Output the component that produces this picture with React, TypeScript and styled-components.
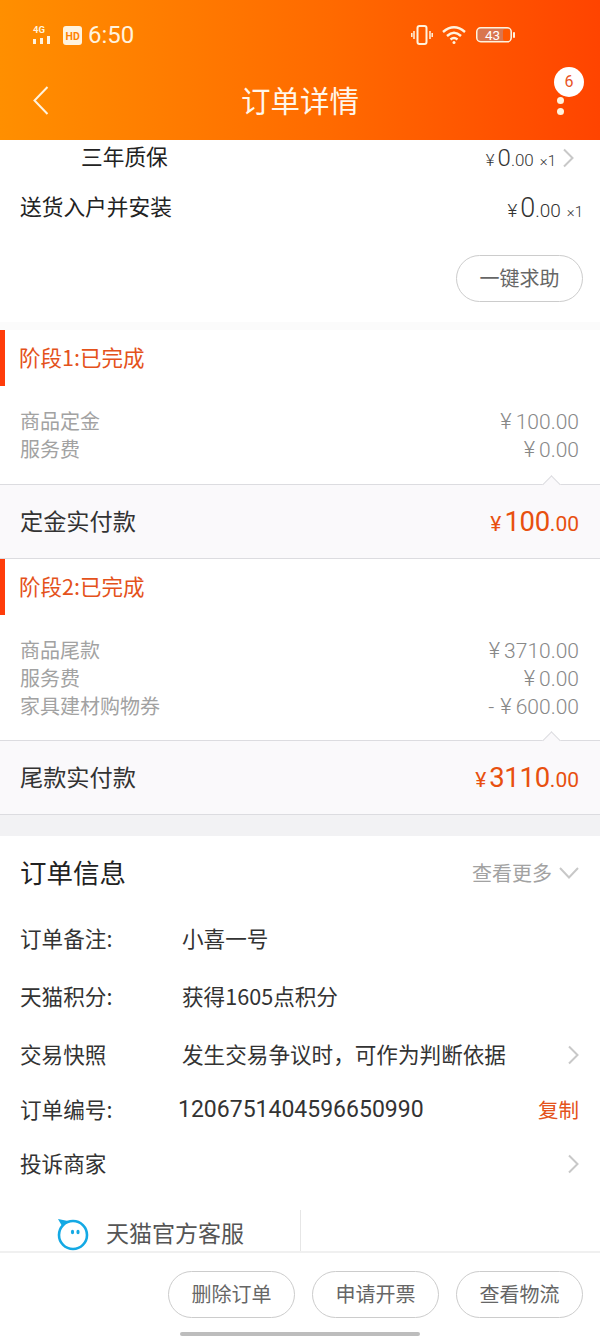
import React, { FC } from 'react'
import styled, { createGlobalStyle } from 'styled-components'

const GlobalStyle = createGlobalStyle`
    html, body {
        margin: 0;
        padding: 0;
        background: #fff;
    }
    * {
        box-sizing: border-box;
    }
`

const Page = styled.div`
    position: relative;
    display: flex;
    flex-direction: column;
    width: 600px;
    height: 1337px;
    overflow: hidden;
    background: #fff;
    font-family: "Noto Sans CJK SC", "Liberation Sans", sans-serif;
    color: #222;
`

const Header = styled.header`
    flex: none;
    height: 140px;
    background: linear-gradient(90deg, #ff8f00 0%, #ff6a00 55%, #ff4400 100%);
    color: #fff;
`

const StatusBar = styled.div`
    display: flex;
    align-items: center;
    justify-content: space-between;
    height: 70px;
    padding: 0 85px 0 32px;
`

const StatusGroup = styled.div`
    display: flex;
    align-items: center;
`

const Clock = styled.span`
    margin-left: 6px;
    font-family: "Roboto", sans-serif;
    font-size: 24px;
    color: #fff3de;
`

const NavBar = styled.div`
    position: relative;
    display: flex;
    align-items: center;
    justify-content: center;
    height: 62px;
`

const NavTitle = styled.h1`
    margin: 0 0 4px;
    font-size: 29.5px;
    font-weight: 400;
    color: #fff6ea;
`

const BackIcon = styled.svg`
    position: absolute;
    left: 33px;
    top: 16px;
`

const MoreDots = styled.div`
    position: absolute;
    left: 557px;
    top: 27px;
    display: flex;
    flex-direction: column;
    gap: 4px;
`

const Dot = styled.i`
    display: block;
    width: 7px;
    height: 7px;
    border-radius: 50%;
    background: #fff3de;
`

const Badge = styled.span`
    position: absolute;
    left: 554px;
    top: -3px;
    width: 30px;
    height: 30px;
    border-radius: 50%;
    background: #fff;
    color: #e8531f;
    font-family: "Roboto", sans-serif;
    font-size: 16px;
    line-height: 30px;
    text-align: center;
`

const ItemSection = styled.section`
    flex: none;
    height: 182px;
    background: #fff;
`

// the CJK font sits lower in its line box than the one in the reference
const Label = styled.span<{ $lift?: number }>`
    display: block;
    margin-bottom: ${({ $lift = 3 }) => $lift}px;
`

const GoodsRow = styled.div<{ $indent: number; $height: number; $right: number }>`
    display: flex;
    align-items: center;
    justify-content: space-between;
    height: ${({ $height }) => $height}px;
    padding: 0 ${({ $right }) => $right}px 0 ${({ $indent }) => $indent}px;
    font-size: 21.7px;
    color: #222;
`

const GoodsPrice = styled.span<{ $large?: boolean }>`
    display: flex;
    align-items: baseline;
    font-family: "Roboto", sans-serif;
    font-size: ${({ $large }) => ($large ? 19 : 17)}px;
    font-weight: 300;
    color: #333;
`

const PriceBig = styled.span<{ $large?: boolean }>`
    margin: 0 0 0 3px;
    font-size: ${({ $large }) => ($large ? 27 : 24)}px;
`

const Times = styled.span`
    margin-left: 6px;
    font-size: 15px;
`

const HelpRow = styled.div`
    display: flex;
    justify-content: flex-end;
    margin-top: 15px;
    padding-right: 17px;
`

const PillButton = styled.button`
    width: 127px;
    height: 47px;
    padding: 0 0 3px;
    background: #fff;
    border: 1px solid #ccc;
    border-radius: 24px;
    color: #666;
    font-family: inherit;
    font-size: 20px;
`

const ThinGap = styled.div`
    flex: none;
    height: 8px;
    background: #fbfbfb;
`

const StageHead = styled.div`
    display: flex;
    align-items: center;
    flex: none;
    height: 56px;
    margin-bottom: 21px;
    padding-left: 14px;
    border-left: 5px solid #ff3c0a;
    font-size: 21.5px;
    color: #e4521b;
`

const Fees = styled.div<{ $height: number }>`
    flex: none;
    height: ${({ $height }) => $height}px;
    padding: 0 21px 0 20px;
`

const FeeRow = styled.div`
    display: flex;
    align-items: center;
    justify-content: space-between;
    height: 28px;
    font-size: 20px;
    color: #a2a2a2;
`

const FeeAmount = styled.span`
    font-family: "Roboto", sans-serif;
    font-size: 21px;
    font-weight: 300;
    color: #888;
`

const FeeSign = styled.span`
    margin-right: 6px;
`

const FeeYen = styled.span`
    margin-right: 4px;
    font-size: 22px;
`

const TotalBar = styled.div`
    position: relative;
    display: flex;
    align-items: center;
    justify-content: space-between;
    flex: none;
    height: 75px;
    padding: 0 21px 0 20px;
    background: #faf9fb;
    border-top: 1px solid #dcdce0;
    border-bottom: 1px solid #dcdce0;
    font-size: 23.2px;
    color: #333;
`

const Caret = styled.i`
    position: absolute;
    right: 42px;
    top: -7px;
    width: 13px;
    height: 13px;
    background: #faf9fb;
    border-top: 1px solid #dcdce0;
    border-left: 1px solid #dcdce0;
    transform: rotate(45deg);
`

const TotalAmount = styled.span`
    display: flex;
    align-items: baseline;
    font-family: "Roboto", sans-serif;
    color: #e8500f;
    font-size: 21px;
`

const TotalBig = styled.span`
    margin-left: 3px;
    font-size: 27.5px;
    letter-spacing: -0.3px;
`

const ThickGap = styled.div`
    flex: none;
    height: 21px;
    background: #f2f2f4;
`

const InfoHead = styled.div`
    display: flex;
    align-items: center;
    justify-content: space-between;
    flex: none;
    height: 74px;
    padding: 0 21px 0 20px;
`

const InfoTitle = styled.h2`
    margin: 0 0 4px;
    font-size: 26.5px;
    font-weight: 400;
    color: #222;
`

const MoreLink = styled.span`
    display: flex;
    align-items: center;
    gap: 7px;
    font-size: 20px;
    color: #a2a2a2;
`

const InfoRow = styled.div<{ $height: number }>`
    display: flex;
    align-items: center;
    flex: none;
    height: ${({ $height }) => $height}px;
    padding: 0 21px 0 20px;
    font-size: 21.6px;
    color: #333;
`

const InfoLabel = styled.span`
    flex: none;
    width: 162px;
    margin-bottom: 3px;
`

const InfoValue = styled.span`
    flex: 1;
    margin-bottom: 3px;
`

const OrderNumber = styled.span`
    flex: 1;
    margin: 0 0 2px -4px;
    font-family: "Roboto", sans-serif;
    font-size: 23px;
    color: #333;
`

const CopyLink = styled.span`
    margin: 0 0 3px;
    font-size: 20.5px;
    color: #e4521b;
`

const ServiceRow = styled.div`
    display: flex;
    flex: none;
    height: 41px;
    margin-top: 19px;
`

const ServiceCell = styled.div`
    display: flex;
    align-items: center;
    gap: 17px;
    width: 301px;
    height: 41px;
    padding: 6px 0 0 57px;
    border-right: 1px solid #e6e6e6;
    font-size: 23px;
    color: #555;
`

const Spacer = styled.div`
    flex: 1;
`

const Footer = styled.footer`
    position: relative;
    flex: none;
    height: 87px;
    background: #fff;
    border-top: 2px solid #f0f0f0;
`

const FooterActions = styled.div`
    display: flex;
    justify-content: flex-end;
    gap: 17px;
    padding: 18px 17px 0 0;
`

const HomeBar = styled.i`
    position: absolute;
    left: 180px;
    bottom: 2px;
    width: 240px;
    height: 4px;
    border-radius: 2px;
    background: #bdbdbd;
`

const ChevronSlot = styled.span`
    display: flex;
    align-self: center;
    margin-left: 6px;
`

const Chevron: FC = () => (
    <svg width="12" height="20" viewBox="0 0 12 20" fill="none" stroke="#c8c8c8" strokeWidth="2">
        <path d="M2 1.5 L10.5 10 L2 18.5" />
    </svg>
)

const Stage: FC<{
    title: string
    fees: [string, string, string][]
    feesHeight: number
    totalLabel: string
    totalInt: string
}> = ({ title, fees, feesHeight, totalLabel, totalInt }) => (
    <>
        <StageHead>
            <Label>{title}</Label>
        </StageHead>
        <Fees $height={feesHeight}>
            {fees.map(([name, sign, amount]) => (
                <FeeRow key={name}>
                    <Label $lift={2}>{name}</Label>
                    <FeeAmount>
                        {sign && <FeeSign>{sign}</FeeSign>}
                        <FeeYen>¥</FeeYen>
                        {amount}
                    </FeeAmount>
                </FeeRow>
            ))}
        </Fees>
        <TotalBar>
            <Caret />
            <Label>{totalLabel}</Label>
            <TotalAmount>
                ¥<TotalBig>{totalInt}</TotalBig>.00
            </TotalAmount>
        </TotalBar>
    </>
)

export default function App() {
    return (
        <Page>
            <GlobalStyle />
            <Header>
                <StatusBar>
                    <StatusGroup>
                        <svg width="22" height="20" viewBox="0 0 22 20" fill="#fff3de">
                            <text x="1" y="8" fontSize="9.5" fontWeight="700" fontFamily="Roboto, sans-serif">4G</text>
                            <rect x="1" y="14" width="3" height="5" />
                            <rect x="8" y="13" width="3" height="6" />
                            <rect x="15" y="11" width="3" height="8" />
                        </svg>
                        <svg width="19" height="19" viewBox="0 0 19 19" style={{ marginLeft: 9 }}>
                            <rect width="19" height="19" rx="3" fill="#fff3de" />
                            <text x="2.5" y="13.5" fontSize="10.5" fontWeight="700" fill="#ff8200" fontFamily="Roboto, sans-serif">HD</text>
                        </svg>
                        <Clock>6:50</Clock>
                    </StatusGroup>
                    <StatusGroup>
                        <svg width="22" height="20" viewBox="0 0 22 20" fill="none" stroke="#fff3de" strokeWidth="2">
                            <rect x="6.5" y="1" width="9" height="18" rx="2" />
                            <path d="M3 6v8M0.8 8v4M19 6v8M21.2 8v4" strokeWidth="1.5" />
                        </svg>
                        <svg width="26" height="20" viewBox="0 0 26 20" fill="none" stroke="#fff3de" strokeWidth="2.4" style={{ marginLeft: 8 }}>
                            <path d="M2 7 Q13 -2.5 24 7" />
                            <path d="M6 11 Q13 4.5 20 11" />
                            <path d="M9.5 14.5 Q13 11.5 16.5 14.5" />
                            <circle cx="13" cy="17.5" r="1.5" fill="#fff3de" stroke="none" />
                        </svg>
                        <svg width="39" height="18" viewBox="0 0 39 18" style={{ marginLeft: 9 }}>
                            <rect x="0.75" y="1.75" width="34.5" height="14" rx="4" fill="#d9764f" stroke="#fff3de" strokeWidth="1.5" />
                            <rect x="27" y="3" width="7" height="12" rx="2" fill="#ff5800" />
                            <rect x="37" y="6" width="2" height="6" rx="1" fill="#fff3de" />
                            <text x="9" y="14" fontSize="13.5" fill="#fff" fontFamily="Roboto, sans-serif">43</text>
                        </svg>
                    </StatusGroup>
                </StatusBar>
                <NavBar>
                    <BackIcon width="16" height="29" viewBox="0 0 16 29" fill="none" stroke="#fff3de" strokeWidth="2">
                        <path d="M14.5 1 L1.5 14.5 L14.5 28" />
                    </BackIcon>
                    <NavTitle>订单详情</NavTitle>
                    <MoreDots>
                        <Dot />
                        <Dot />
                    </MoreDots>
                    <Badge>6</Badge>
                </NavBar>
            </Header>
            <ItemSection>
                <GoodsRow $indent={81} $height={35} $right={26}>
                    <Label $lift={4}>三年质保</Label>
                    <GoodsPrice>
                        ¥<PriceBig>0</PriceBig>.00<Times>×1</Times>
                        <ChevronSlot>
                            <Chevron />
                        </ChevronSlot>
                    </GoodsPrice>
                </GoodsRow>
                <GoodsRow $indent={20} $height={65} $right={17}>
                    <Label $lift={4}>送货入户并安装</Label>
                    <GoodsPrice $large>
                        ¥<PriceBig $large>0</PriceBig>.00<Times>×1</Times>
                    </GoodsPrice>
                </GoodsRow>
                <HelpRow>
                    <PillButton>一键求助</PillButton>
                </HelpRow>
            </ItemSection>
            <ThinGap />
            <Stage
                title="阶段1:已完成"
                fees={[['商品定金', '', '100.00'], ['服务费', '', '0.00']]}
                feesHeight={77}
                totalLabel="定金实付款"
                totalInt="100"
            />
            <Stage
                title="阶段2:已完成"
                fees={[['商品尾款', '', '3710.00'], ['服务费', '', '0.00'], ['家具建材购物券', '-', '600.00']]}
                feesHeight={104}
                totalLabel="尾款实付款"
                totalInt="3110"
            />
            <ThickGap />
            <InfoHead>
                <InfoTitle>订单信息</InfoTitle>
                <MoreLink>
                    <Label $lift={2}>查看更多</Label>
                    <svg width="20" height="12" viewBox="0 0 20 12" fill="none" stroke="#c8c8c8" strokeWidth="2">
                        <path d="M1 1 L10 10.5 L19 1" />
                    </svg>
                </MoreLink>
            </InfoHead>
            <InfoRow $height={58}>
                <InfoLabel>订单备注:</InfoLabel>
                <InfoValue>小喜一号</InfoValue>
            </InfoRow>
            <InfoRow $height={58}>
                <InfoLabel>天猫积分:</InfoLabel>
                <InfoValue>获得1605点积分</InfoValue>
            </InfoRow>
            <InfoRow $height={57}>
                <InfoLabel>交易快照</InfoLabel>
                <InfoValue>发生交易争议时，可作为判断依据</InfoValue>
                <Chevron />
            </InfoRow>
            <InfoRow $height={54}>
                <InfoLabel>订单编号:</InfoLabel>
                <OrderNumber>1206751404596650990</OrderNumber>
                <CopyLink>复制</CopyLink>
            </InfoRow>
            <InfoRow $height={54}>
                <InfoLabel>投诉商家</InfoLabel>
                <InfoValue />
                <Chevron />
            </InfoRow>
            <ServiceRow>
                <ServiceCell>
                    <svg width="32" height="34" viewBox="0 0 32 34" fill="none">
                        <circle cx="16" cy="18" r="14" stroke="#14a9e4" strokeWidth="2.6" />
                        <path d="M1 2 L11 4 L5 9 Z" fill="#14a9e4" />
                        <ellipse cx="15.5" cy="15" rx="1.6" ry="2.2" fill="#14a9e4" />
                        <ellipse cx="21" cy="15" rx="1.6" ry="2.2" fill="#14a9e4" />
                    </svg>
                    <Label>天猫官方客服</Label>
                </ServiceCell>
            </ServiceRow>
            <Spacer />
            <Footer>
                <FooterActions>
                    <PillButton>删除订单</PillButton>
                    <PillButton>申请开票</PillButton>
                    <PillButton>查看物流</PillButton>
                </FooterActions>
                <HomeBar />
            </Footer>
        </Page>
    )
}
